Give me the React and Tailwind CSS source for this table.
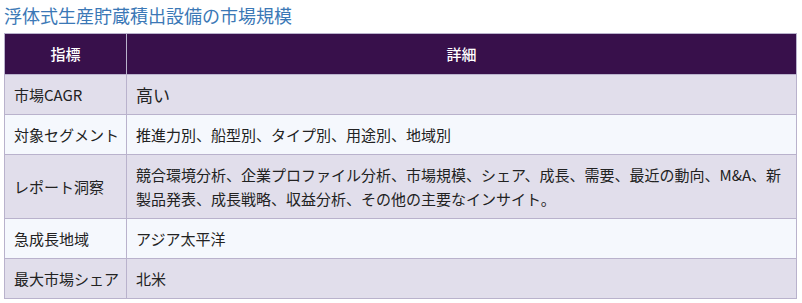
const rows = [
    { label: '市場CAGR', value: '高い', big: true },
    { label: '対象セグメント', value: '推進力別、船型別、タイプ別、用途別、地域別' },
    { label: 'レポート洞察', value: '競合環境分析、企業プロファイル分析、市場規模、シェア、成長、需要、最近の動向、M&A、新製品発表、成長戦略、収益分析、その他の主要なインサイト。' },
    { label: '急成長地域', value: 'アジア太平洋' },
    { label: '最大市場シェア', value: '北米' },
];

const App = () => {
    return (
        <div className="w-[802px] h-[303px] bg-white px-1 pt-[3px] text-[#222]" style={{ fontFamily: '"Noto Sans CJK JP", "Noto Sans", sans-serif' }}>
            <h2 className="text-[18px] leading-[24px] text-[#3b78b6] font-normal">浮体式生産貯蔵積出設備の市場規模</h2>
            <table className="mt-[6px] w-[793px] border-collapse text-[15px] leading-[24px]">
                <thead>
                    <tr className="bg-[#38104b] text-white">
                        <th className="w-[122px] h-[41px] border border-[#b9b2cc] font-medium text-center">指標</th>
                        <th className="border border-[#b9b2cc] font-medium text-center">詳細</th>
                    </tr>
                </thead>
                <tbody>
                    {rows.map((row, i) => (
                        <tr key={row.label} className={i % 2 === 0 ? 'bg-[#e1deeb]' : 'bg-[#f5f8fd]'}>
                            <td className="border border-[#b9b2cc] pl-[9px] pr-1 py-[7.5px] whitespace-nowrap">{row.label}</td>
                            <td className={`border border-[#b9b2cc] pl-[9px] pr-3 py-[7.5px] ${row.big ? 'text-[17px] leading-[24px]' : ''}`}>{row.value}</td>
                        </tr>
                    ))}
                </tbody>
            </table>
        </div>
    );
};

export default App;
